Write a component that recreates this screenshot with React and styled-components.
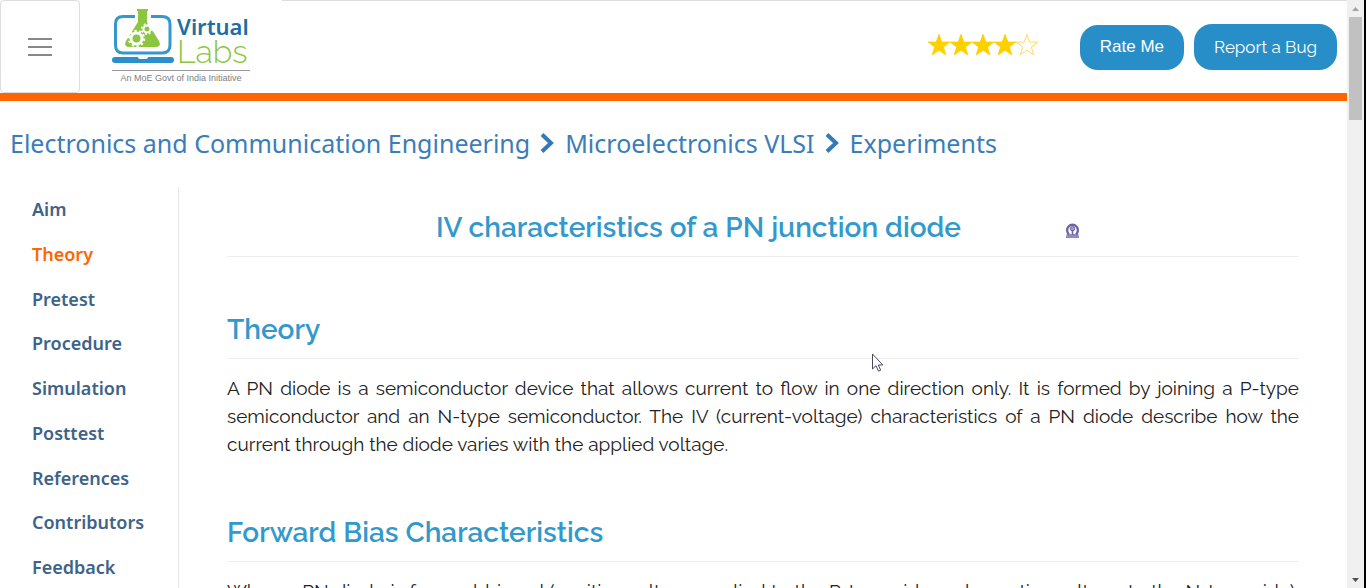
import React from "react";
import styled, { createGlobalStyle } from "styled-components";

const sans = '"Noto Sans", "Open Sans", sans-serif';
const display = 'Raleway, Lato, "Open Sans", sans-serif';

const GlobalStyle = createGlobalStyle`
  *, *::before, *::after { box-sizing: border-box; }
  body { margin: 0; background: #fff; color: #222; font-family: ${display}; }
`;

const Shell = styled.div`
  display: grid;
  grid-template-columns: minmax(0, 1fr) 17px 2px;
  height: 100vh;
  overflow: hidden;
`;
const Page = styled.div`
  min-width: 0;
  overflow: hidden;
`;

const Header = styled.header`
  display: flex;
  align-items: stretch;
  height: 101px;
  border-bottom: 8px solid #ff6600;
`;
const MenuButton = styled.button`
  display: flex;
  align-items: center;
  justify-content: center;
  width: 80px;
  padding: 0;
  border: 1px solid #ddd;
  border-radius: 4px;
  background: #fff;
`;
const MenuBars = styled.span`
  display: flex;
  flex-direction: column;
  gap: 6px;
  width: 24px;
  i { height: 2px; background: #888; }
`;
const Brand = styled.a`
  display: flex;
  flex-direction: column;
  width: 202px;
  padding: 8px 32px 0;
  text-decoration: none;
`;
const BrandTop = styled.span`
  display: flex;
  gap: 3px;
  height: 63px;
  border-bottom: 1px solid #999;
  svg { flex-shrink: 0; }
`;
const Wordmark = styled.span`
  display: flex;
  flex-direction: column;
  padding-top: 6px;
`;
const Word = styled.span`
  color: ${(p) => (p.$light ? "#8cc63f" : "#1c6ea4")};
  font-family: ${(p) => (p.$light ? display : sans)};
  font-size: ${(p) => (p.$light ? "32px" : "22px")};
  font-weight: ${(p) => (p.$light ? 300 : 600)};
  line-height: 25px;
`;
const Tagline = styled.span`
  color: #808080;
  font: 9px/14px "Liberation Sans", sans-serif;
  text-align: center;
  white-space: nowrap;
`;
const Actions = styled.div`
  display: flex;
  flex: 1;
  align-items: center;
  justify-content: flex-end;
  gap: 10px;
  padding-right: 10px;
  border-top: 1px solid #ddd;
`;
const Stars = styled.div`
  display: flex;
  margin-right: 32px;
  padding-bottom: 4px;
`;
const Pill = styled.button`
  height: ${(p) => (p.$display ? 46 : 45)}px;
  padding: 0 20px;
  border: 0;
  border-radius: 18px;
  background: #288ec8;
  color: #fff;
  font-family: ${(p) => (p.$display ? display : '"Liberation Sans", sans-serif')};
  font-size: 17px;
  white-space: nowrap;
`;

const Breadcrumb = styled.nav`
  display: flex;
  align-items: center;
  gap: 9px;
  padding: 24px 10px 0;
  font: 25px/36px ${sans};
  a { color: #3a7db8; text-decoration: none; }
`;
const Columns = styled.div`
  display: grid;
  grid-template-columns: 179px minmax(0, 1fr);
  padding-top: 26px;
`;
const Sidebar = styled.nav`
  padding-left: 32px;
  border-right: 1px solid #e7e7e7;
`;
const SideList = styled.ul`
  display: grid;
  grid-auto-rows: 1fr;
  height: 403px;
  margin: 0;
  padding: 0;
  list-style: none;
`;
const SideLink = styled.a`
  color: ${(p) => (p.$active ? "#ff6600" : "#3e6389")};
  font: 600 18px/44px ${sans};
  text-decoration: none;
`;
const Content = styled.main`
  padding: 20px 48px 0;
`;
const headingStyle = `
  margin: 0;
  color: #3399cc;
  font-family: ${display};
  font-size: 28px;
  font-weight: 600;
  line-height: 40px;
`;
const TitleRow = styled.div`
  display: flex;
  align-items: center;
  justify-content: center;
  gap: 104px;
  height: 50px;
  padding: 0 10px 8px 0;
  border-bottom: 1px solid #eee;
`;
const Title = styled.h1`${headingStyle}`;
const Section = styled.section`
  padding-top: 53px;
`;
const SectionTitle = styled.h2`
  ${headingStyle}
  padding-bottom: 8px;
  border-bottom: 1px solid #eee;
`;
const Paragraph = styled.p`
  margin: 0;
  padding: 15px 0 2px;
  font-size: 19px;
  line-height: 28px;
  text-align: justify;
`;

const Scrollbar = styled.div`
  display: flex;
  flex-direction: column;
  align-items: center;
  justify-content: space-between;
  padding: 0 2px;
  background: #f0f0f0;
`;
const ScrollStart = styled.div`
  display: flex;
  flex-direction: column;
  width: 13px;
`;
const ArrowBox = styled.span`
  display: flex;
  align-items: center;
  justify-content: center;
  height: 17px;
`;
const Thumb = styled.div`
  height: 103px;
  background: #c1c1c1;
`;
const Edge = styled.div`
  background: #000;
`;
const Pointer = styled.svg`
  position: absolute;
  left: 871px;
  top: 353px;
`;

function Star({ filled }) {
  return (
    <svg width="22" height="22" viewBox="0 0 22 22" overflow="visible">
      <path
        d="M11 .5l2.700 7.600h8l-6.400 4.900 2.400 7.800L11 16.100l-6.700 4.700 2.400-7.800L.3 8.100h8z"
        fill={filled ? "#ffd000" : "#fff"}
        stroke={filled ? "#ffd000" : "#ffd95a"}
      />
    </svg>
  );
}

function Chevron() {
  return (
    <svg width="17" height="22" viewBox="0 0 17 22" aria-hidden="true">
      <path d="M3 2.500l9 8.500-9 8.500" fill="none" stroke="#337ab7" strokeWidth="4" />
    </svg>
  );
}

function LabsLogo() {
  return (
    <svg width="62" height="56" viewBox="0 0 62 56" aria-hidden="true">
      <path d="M23 8.500H11Q3.500 8.500 3.500 16V37Q3.500 45 11 45H50Q58 45 58 37V16Q58 8.500 50 8.500H39" fill="none" stroke="#3399cc" strokeWidth="3" />
      <rect x="0" y="49" width="62" height="6" rx="3" fill="#2c8fca" />
      <path d="M26 49h10q0 2-2 2h-6q-2 0-2-2z" fill="#fff" />
      <path d="M25 1h11v2h-1v11l12 19q3 6-4 6H18q-7 0-4-6l12-19V3h-1z" fill="#8cc63f" />
      <g fill="none" stroke="#fff">
        <circle cx="24.500" cy="30.500" r="5.500" strokeWidth="3" />
        <circle cx="24.500" cy="30.500" r="7.700" strokeWidth="2" strokeDasharray="2.400 2.438" />
        <circle cx="35" cy="21" r="3.500" strokeWidth="2" />
        <circle cx="35" cy="21" r="5.200" strokeWidth="1.600" strokeDasharray="2 2.084" />
      </g>
    </svg>
  );
}

function Emblem() {
  return (
    <svg width="15" height="20" viewBox="0 -4 15 20" role="img" aria-label="Institute emblem">
      <path d="M4 12.300A5.400 5.400 0 1 1 11 12.300" fill="none" stroke="#6f65a3" strokeWidth="2.400" />
      <circle cx="7.500" cy="6.700" r="2.200" fill="#a69fc9" stroke="#6f65a3" />
      <path d="M7.500 8v5" stroke="#6f65a3" strokeWidth="1.600" />
      <path d="M1.500 13h12M1 15h13" stroke="#6f65a3" strokeWidth="1.300" />
    </svg>
  );
}

function ScrollArrow({ down }) {
  return (
    <ArrowBox>
      <svg width="7" height="4" viewBox="0 0 7 4" aria-hidden="true">
        <path d={down ? "M0 0h7L3.500 4z" : "M0 4h7L3.500 0z"} fill={down ? "#505050" : "#a3a3a3"} />
      </svg>
    </ArrowBox>
  );
}

const links = ["Aim", "Theory", "Pretest", "Procedure", "Simulation", "Posttest", "References", "Contributors", "Feedback"];

export default function App() {
  return (
    <Shell>
      <GlobalStyle />
      <Page>
        <Header>
          <MenuButton aria-label="Menu">
            <MenuBars><i /><i /><i /></MenuBars>
          </MenuButton>
          <Brand href="#">
            <BrandTop>
              <LabsLogo />
              <Wordmark>
                <Word>Virtual</Word>
                <Word $light>Labs</Word>
              </Wordmark>
            </BrandTop>
            <Tagline>An MoE Govt of India Initiative</Tagline>
          </Brand>
          <Actions>
            <Stars role="img" aria-label="Rated 4 of 5 stars">
              {[1, 2, 3, 4, 5].map((n) => <Star key={n} filled={n < 5} />)}
            </Stars>
            <Pill>Rate Me</Pill>
            <Pill $display>Report a Bug</Pill>
          </Actions>
        </Header>
        <Breadcrumb aria-label="Breadcrumb">
          <a href="#">Electronics and Communication Engineering</a>
          <Chevron />
          <a href="#">Microelectronics VLSI</a>
          <Chevron />
          <a href="#">Experiments</a>
        </Breadcrumb>
        <Columns>
          <Sidebar aria-label="Experiment sections">
            <SideList>
              {links.map((l) => (
                <li key={l}><SideLink href="#" $active={l === "Theory"}>{l}</SideLink></li>
              ))}
            </SideList>
          </Sidebar>
          <Content>
            <TitleRow>
              <Title>IV characteristics of a PN junction diode</Title>
              <Emblem />
            </TitleRow>
            <Section>
              <SectionTitle>Theory</SectionTitle>
              <Paragraph>
                A PN diode is a semiconductor device that allows current to flow in one direction only. It is formed by joining a P-type semiconductor and an N-type semiconductor. The IV (current-voltage) characteristics of a PN diode describe how the current through the diode varies with the applied voltage.
              </Paragraph>
            </Section>
            <Section>
              <SectionTitle>Forward Bias Characteristics</SectionTitle>
              <Paragraph>
                When a PN diode is forward-biased (positive voltage applied to the P-type side and negative voltage to the N-type side), the barrier is lowered and current flows through the junction.
              </Paragraph>
            </Section>
          </Content>
        </Columns>
      </Page>
      <Scrollbar>
        <ScrollStart>
          <ScrollArrow />
          <Thumb />
        </ScrollStart>
        <ScrollArrow down />
      </Scrollbar>
      <Edge />
      <Pointer width="13" height="20" viewBox="0 0 13 20" aria-hidden="true">
        <path d="M1.500 1v15l3.500-3.300 2.500 5.500 2.200-1-2.400-5.200h4.500z" fill="#fff" stroke="#4a4a5c" />
      </Pointer>
    </Shell>
  );
}
